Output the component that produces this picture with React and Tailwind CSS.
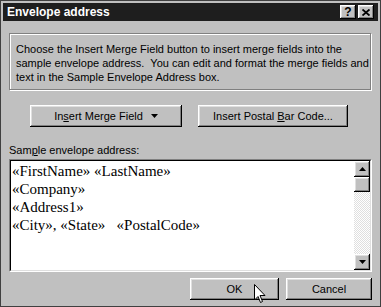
const ui = "font-['Tahoma','Liberation_Sans',sans-serif] text-[11px] text-black";
const raised =
  "bg-[#c0c0c0] shadow-[inset_-1px_-1px_0_#000,inset_1px_1px_0_#fff,inset_-2px_-2px_0_#808080,inset_2px_2px_0_#dfdfdf]";

function TitleButton({ children }) {
  return (
    <div className={`w-[16px] h-[14px] flex items-center justify-center ${raised}`}>
      {children}
    </div>
  );
}

function Button({ className, children }) {
  return (
    <div className={`h-[22px] flex items-center justify-center ${raised} ${className}`}>
      {children}
    </div>
  );
}

function Arrow({ up }) {
  return (
    <svg width="7" height="4" viewBox="0 0 7 4">
      {up ? <path d="M3.5 0 L7 4 L0 4 Z" fill="#000" /> : <path d="M0 0 L7 0 L3.5 4 Z" fill="#000" />}
    </svg>
  );
}

export default function App() {
  return (
    <div className={`w-[381px] h-[307px] overflow-hidden bg-[#c0c0c0] border border-[#404040] p-[2px] relative ${ui}`}>
      {/* Title bar */}
      <div className="h-[18px] bg-[#1e1e1e] flex items-center justify-between pl-[4px] pr-[4px]">
        <span className="text-white font-bold text-[12px]">Envelope address</span>
        <div className="flex gap-[2px]">
          <TitleButton>
            <span className="font-bold text-[12px] leading-none">?</span>
          </TitleButton>
          <TitleButton>
            <svg width="8" height="7" viewBox="0 0 8 7">
              <path d="M0.5 0.5 L7.5 6.5 M7.5 0.5 L0.5 6.5" stroke="#000" strokeWidth="1.8" />
            </svg>
          </TitleButton>
        </div>
      </div>

      {/* Description group */}
      <div className="mt-[12px] ml-[6px] w-[362px] h-[57px] border border-[#808080] shadow-[1px_1px_0_#fff,inset_1px_1px_0_#fff] px-[6px] pt-[8px] leading-[14px] whitespace-nowrap">
        Choose the Insert Merge Field button to insert merge fields into the
        <br />
        sample envelope address.&nbsp; You can edit and format the merge fields and
        <br />
        text in the Sample Envelope Address box.
      </div>

      {/* Buttons */}
      <div className="mt-[15px] ml-[27px] flex gap-[16px]">
        <Button className="w-[152px] gap-[8px]">
          <span>
            In<u>s</u>ert Merge Field
          </span>
          <Arrow />
        </Button>
        <Button className="w-[150px]">
          <span>
            Insert Postal <u>B</u>ar Code...
          </span>
        </Button>
      </div>

      {/* Sample address */}
      <div className="mt-[16px] ml-[6px] leading-[14px]">
        Sam<u>p</u>le envelope address:
      </div>
      <div className="mt-[2px] ml-[6px] w-[363px] h-[113px] border border-t-[#808080] border-l-[#808080] border-b-white border-r-white">
        <div className="w-full h-full border border-t-black border-l-black border-b-[#dfdfdf] border-r-[#dfdfdf] bg-white flex">
          <div className="flex-1 pl-[1px] pt-[1px] font-['Liberation_Serif',serif] text-[15px] leading-[18px] whitespace-nowrap">
            <div>«FirstName» «LastName»</div>
            <div>«Company»</div>
            <div>«Address1»</div>
            <div>«City», «State»&nbsp;&nbsp; «PostalCode»</div>
          </div>
          <div className="w-[16px] flex flex-col bg-[repeating-conic-gradient(#dfdfdf_0_25%,#fff_0_50%)] bg-[length:2px_2px]">
            <div className={`h-[16px] flex items-center justify-center ${raised}`}>
              <Arrow up />
            </div>
            <div className={`h-[15px] ${raised}`} />
            <div className="flex-1" />
            <div className={`h-[16px] flex items-center justify-center ${raised}`}>
              <Arrow />
            </div>
          </div>
        </div>
      </div>

      {/* OK / Cancel */}
      <div className="mt-[6px] ml-[187px] flex gap-[7px]">
        <Button className="w-[89px]">OK</Button>
        <Button className="w-[86px]">Cancel</Button>
      </div>

      {/* Mouse cursor */}
      <svg className="absolute left-[253px] top-[283px]" width="12" height="20" viewBox="0 0 12 20">
        <path
          d="M0.5 0.5 L0.5 16 L4 12.5 L6.5 18.5 L8.5 17.5 L6 11.5 L11 11.5 Z"
          fill="#fff"
          stroke="#000"
          strokeWidth="1"
          strokeLinejoin="miter"
        />
      </svg>
    </div>
  );
}
